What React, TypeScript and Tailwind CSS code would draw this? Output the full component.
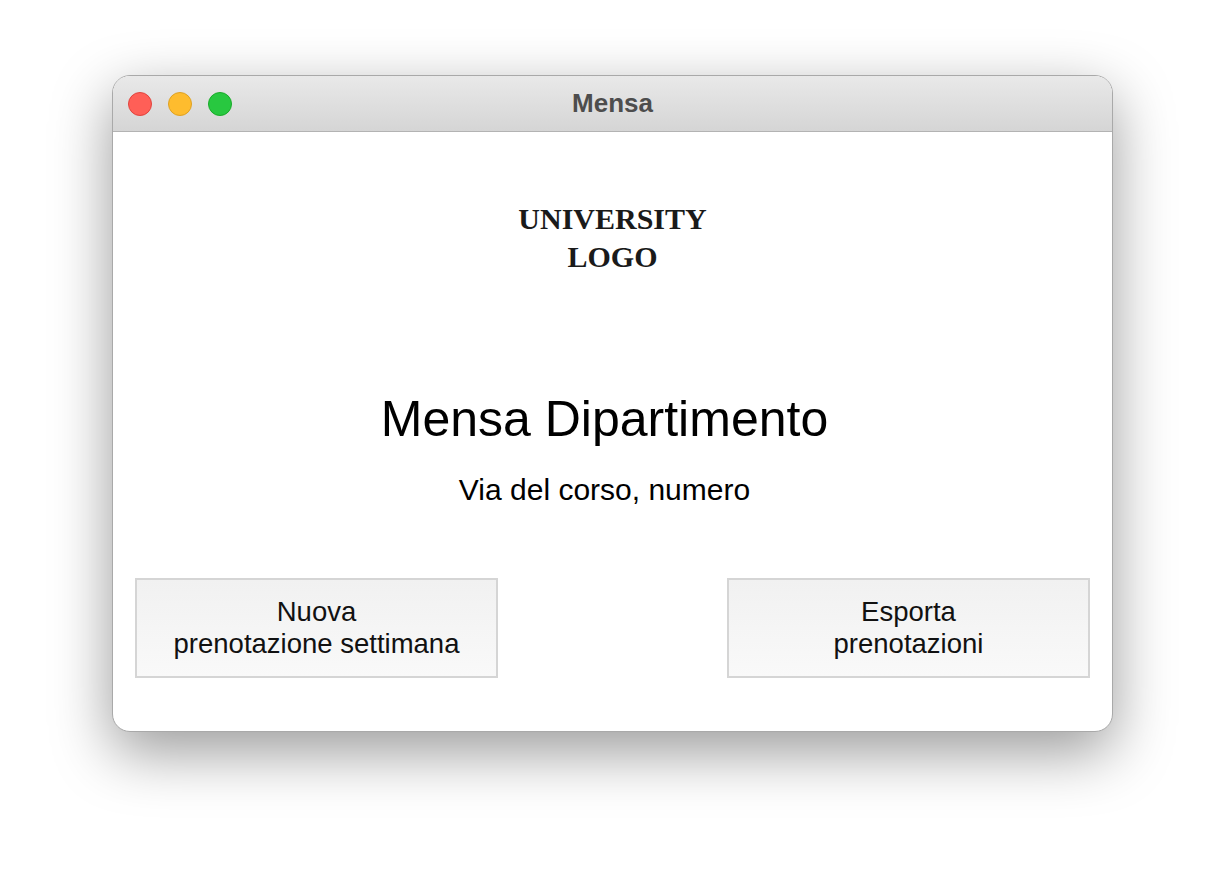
import React from "react";

export default function App() {
  return (
    <div className="w-[1224px] h-[880px] bg-white pt-[75px] pl-[112px]" style={{ fontFamily: '"Liberation Sans", Arial, sans-serif' }}>
      <div className="w-[1001px] h-[657px] rounded-[18px] bg-white border border-[#a9a9a9] overflow-hidden flex flex-col shadow-[0_20px_60px_rgba(0,0,0,0.4)]">
        <div className="relative h-[56px] shrink-0 bg-gradient-to-b from-[#e9e9e9] to-[#d5d5d5] border-b border-[#b3b3b3] flex items-center pl-[15px] gap-[16px]">
          <div className="w-[24px] h-[24px] rounded-full bg-[#ff5f57] border border-[#e0443e]" />
          <div className="w-[24px] h-[24px] rounded-full bg-[#febc2e] border border-[#dea123]" />
          <div className="w-[24px] h-[24px] rounded-full bg-[#28c840] border border-[#1aab29]" />
          <div className="absolute inset-0 flex items-center justify-center pb-[2px] pointer-events-none">
            <span className="text-[26px] font-bold text-[#4d4d4d] leading-none">Mensa</span>
          </div>
        </div>
        <div className="flex-1 flex flex-col items-center pt-[68px] px-[22px]">
          <div className="text-center text-[30px] leading-[38px] font-bold text-[#1a1a1a]" style={{ fontFamily: '"Liberation Serif", "Times New Roman", serif' }}>
            <div>UNIVERSITY</div>
            <div>LOGO</div>
          </div>
          <div className="mt-[113px] pr-[16px] text-[50px] leading-[60px] text-black">Mensa Dipartimento</div>
          <div className="mt-[23px] pr-[16px] text-[30px] leading-[36px] text-black">Via del corso, numero</div>
          <div className="mt-[70px] w-full flex justify-between">
            <button className="w-[363px] h-[100px] border-2 border-[#d5d5d5] bg-gradient-to-b from-[#f1f1f1] to-[#f9f9f9] flex flex-col items-center justify-center text-[27.5px] leading-[32px] text-[#111]">
              <span>Nuova</span>
              <span>prenotazione settimana</span>
            </button>
            <button className="w-[363px] h-[100px] border-2 border-[#d5d5d5] bg-gradient-to-b from-[#f1f1f1] to-[#f9f9f9] flex flex-col items-center justify-center text-[27.5px] leading-[32px] text-[#111]">
              <span>Esporta</span>
              <span>prenotazioni</span>
            </button>
          </div>
        </div>
      </div>
    </div>
  );
}
